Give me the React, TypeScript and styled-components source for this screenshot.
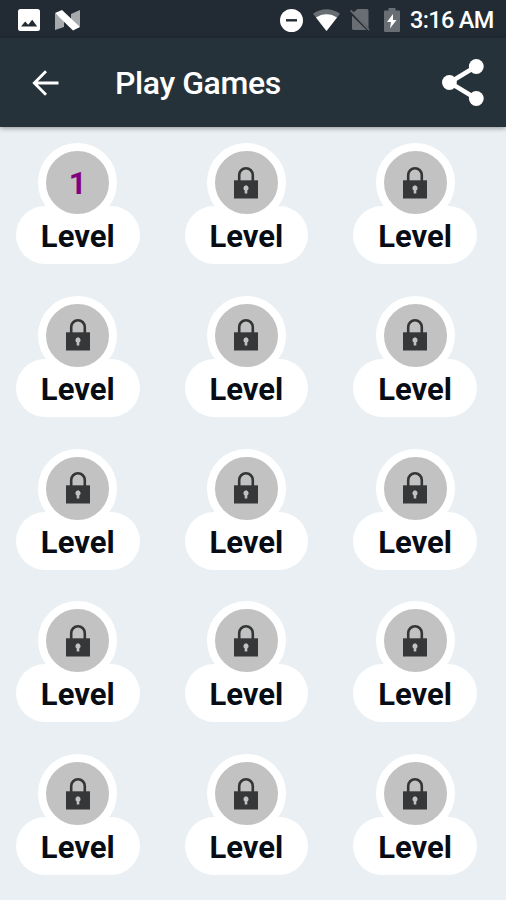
import React from "react";
import styled, { createGlobalStyle } from "styled-components";

const GlobalStyle = createGlobalStyle`
  * { box-sizing: border-box; }
  body { margin: 0; background: #e9eff2; font-family: Roboto, sans-serif; }
`;

const Screen = styled.main`
  width: 506px;
  height: 900px;
  overflow: hidden;
  display: flex;
  flex-direction: column;
  background: #e9eff2;
`;

const StatusBar = styled.div`
  flex: none;
  height: 38px;
  display: flex;
  align-items: center;
  justify-content: space-between;
  padding: 2px 12px 0 18px;
  background: #222b33;
  color: #fff;
`;

const StatusGroup = styled.div<{ $gap: number }>`
  display: flex;
  align-items: center;
  gap: ${(p) => p.$gap}px;
`;

const Clock = styled.span`
  width: 84px;
  font-size: 23.5px;
  line-height: 28px;
  font-weight: 500;
  letter-spacing: -0.65px;
  white-space: nowrap;
`;

const AppBar = styled.header`
  flex: none;
  height: 89px;
  display: flex;
  align-items: center;
  padding: 0 22px 0 32px;
  background: #26323a;
  color: #fff;
  box-shadow: 0 1px 5px rgba(0, 0, 0, 0.4);
`;

const IconButton = styled.button`
  display: flex;
  padding: 0;
  border: 0;
  background: none;
  color: inherit;
`;

const Title = styled.h1`
  flex: 1;
  margin: 0 0 0 56px;
  font-size: 32px;
  line-height: 40px;
  font-weight: 500;
  letter-spacing: -0.4px;
`;

const LevelGrid = styled.section`
  display: grid;
  grid-template-columns: repeat(3, 123.5px);
  grid-auto-rows: 121px;
  column-gap: 45.2px;
  row-gap: 31.8px;
  padding: 16px 0 0 16px;
`;

const LevelCard = styled.div`
  display: flex;
  flex-direction: column;
  align-items: center;
`;

const Badge = styled.div`
  z-index: 1;
  flex: none;
  width: 79px;
  height: 79px;
  margin-bottom: -16px;
  display: flex;
  align-items: center;
  justify-content: center;
  border: 8px solid #fff;
  border-radius: 50%;
  background: #c2c2c2;
`;

const LevelNumber = styled.span`
  padding-top: 2px;
  font-size: 31px;
  line-height: 36px;
  font-weight: 700;
  color: #800080;
`;

const Pill = styled.div`
  width: 100%;
  height: 58px;
  border-radius: 29px;
  background: #fff;
  color: #080c14;
  font-size: 31px;
  line-height: 62px;
  font-weight: 700;
  text-align: center;
`;

const PictureIcon = () => (
  <svg width="22" height="22" viewBox="0 0 22 22">
    <rect width="22" height="22" rx="2.5" fill="#fff" />
    <path d="M3 17.5 7.2 12.5l3 3.2 4-5 5 6.8z" fill="#222b33" />
  </svg>
);

const NougatIcon = () => (
  <svg width="25" height="21" viewBox="0 0 25 21">
    <path d="M0 3.5 9 10v7L0 20zM25 0v17l-9-6V4z" fill="#a6aaad" />
    <path d="M0 3 7 0l18 17-7 3.5z" fill="#fff" />
  </svg>
);

const DoNotDisturbIcon = () => (
  <svg width="23" height="23" viewBox="0 0 23 23">
    <circle cx="11.5" cy="11.5" r="11.5" fill="#fff" />
    <path d="M6 11.3h11" stroke="#222b33" strokeWidth="2.4" />
  </svg>
);

const WifiIcon = () => (
  <svg width="27" height="22" viewBox="0 0 27 22">
    <path d="M0 4.7C8-1.3 19-1.3 27 4.7L13.5 22z" fill="#686e73" />
    <path d="M3 8.5c6.3-4.5 14.7-4.5 21 0L13.5 22z" fill="#fff" />
  </svg>
);

const SimSlot = styled.span`
  display: flex;
  margin-right: 4px;
`;

const NoSimIcon = () => (
  <svg width="20" height="22" viewBox="0 0 20 22">
    <path d="M7.5 0H17a1.5 1.5 0 0 1 1.5 1.5V19L3 3.8zM2 6.8 16.5 21H3.5A1.5 1.5 0 0 1 2 19.5z" fill="#686e73" />
    <path d="M.7 1.3 19 21" stroke="#686e73" strokeWidth="1.7" />
  </svg>
);

const BatteryIcon = () => (
  <svg width="16" height="24" viewBox="0 0 16 24">
    <path d="M4.5 0h7v2.5H15A1 1 0 0 1 16 3.5V23a1 1 0 0 1-1 1H1a1 1 0 0 1-1-1V3.5a1 1 0 0 1 1-1h3.5z" fill="#686e73" />
    <path d="m9 6-6 8h4l-1 6.5L12.5 12H9z" fill="#fff" />
  </svg>
);

const BackIcon = () => (
  <svg width="27" height="26" viewBox="0 0 27 26" fill="none" stroke="#fff" strokeWidth="2.8">
    <path d="M14 1.3 2.3 13 14 24.7M2.3 13H26.5" />
  </svg>
);

const ShareIcon = () => (
  <svg width="42" height="47" viewBox="0 0 42 47" fill="#fff">
    <path d="M34 7.5 7.5 23.5 34 39.5" fill="none" stroke="#fff" strokeWidth="4.4" />
    <circle cx="34.3" cy="7.5" r="7.4" />
    <circle cx="7.4" cy="23.5" r="7.4" />
    <circle cx="34.3" cy="39.5" r="7.4" />
  </svg>
);

const LockIcon = () => (
  <svg width="24" height="32" viewBox="0 0 24 32">
    <path d="M5.2 14V8.1a6.8 6.8 0 0 1 13.6 0V14" fill="none" stroke="#333537" strokeWidth="2.6" />
    <path d="M0 13.3h24v18.2H0z" fill="#353739" />
    <path d="M12 18.3a2.9 2.9 0 0 0-1.3 5.3v3h2.6v-3a2.9 2.9 0 0 0-1.3-5.3z" fill="#c2c2c2" />
  </svg>
);

const levels = Array.from({ length: 15 }, (_, i) => ({ number: i + 1, locked: i > 0 }));

export default function App() {
  return (
    <Screen>
      <GlobalStyle />
      <StatusBar>
        <StatusGroup $gap={15}>
          <PictureIcon />
          <NougatIcon />
        </StatusGroup>
        <StatusGroup $gap={10}>
          <DoNotDisturbIcon />
          <WifiIcon />
          <SimSlot><NoSimIcon /></SimSlot>
          <BatteryIcon />
          <Clock>3:16 AM</Clock>
        </StatusGroup>
      </StatusBar>
      <AppBar>
        <IconButton aria-label="Back"><BackIcon /></IconButton>
        <Title>Play Games</Title>
        <IconButton aria-label="Share"><ShareIcon /></IconButton>
      </AppBar>
      <LevelGrid>
        {levels.map((level) => (
          <LevelCard key={level.number}>
            <Badge>{level.locked ? <LockIcon /> : <LevelNumber>{level.number}</LevelNumber>}</Badge>
            <Pill>Level</Pill>
          </LevelCard>
        ))}
      </LevelGrid>
    </Screen>
  );
}
